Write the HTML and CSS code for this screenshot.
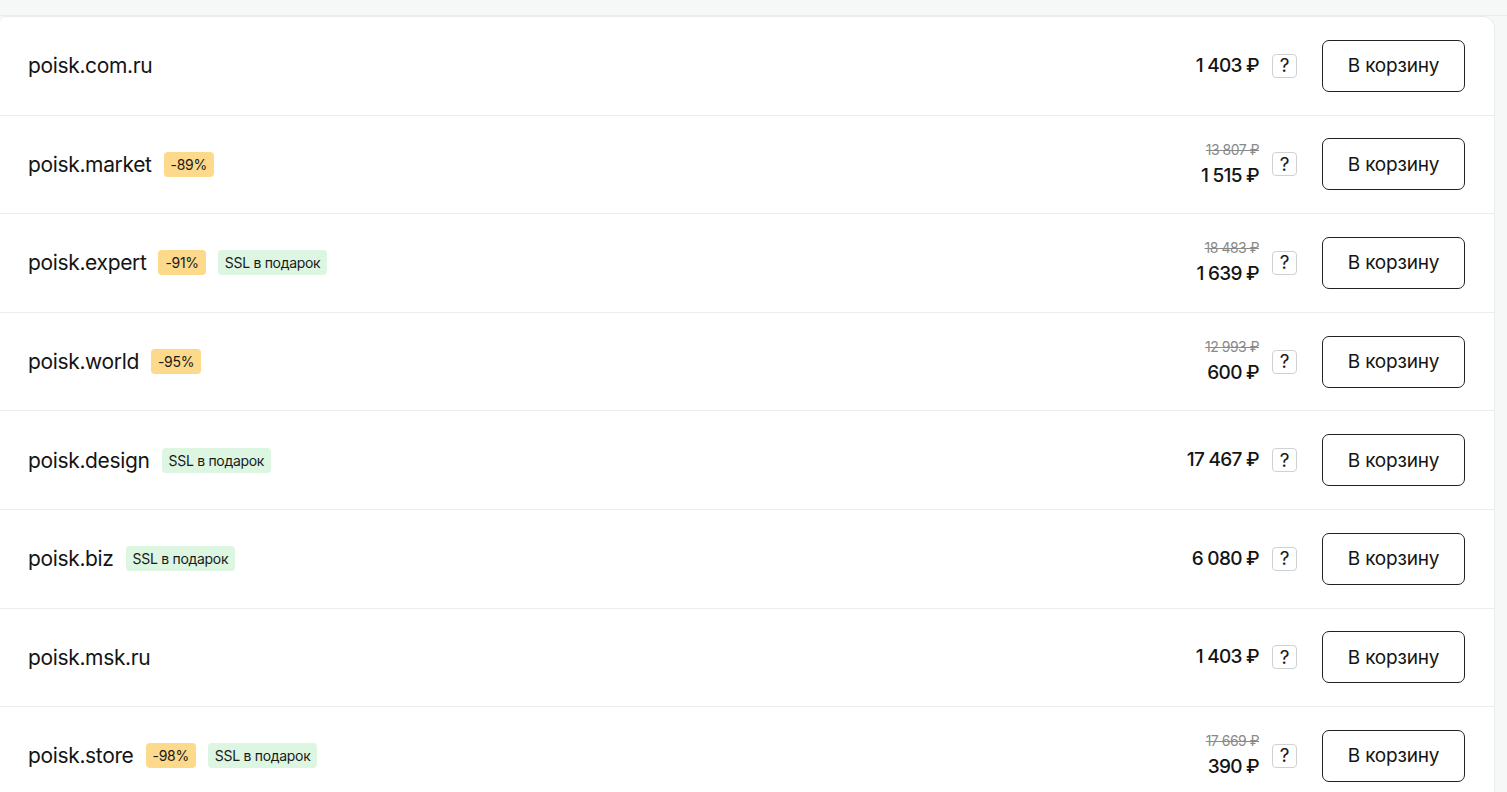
FILE: index.html
```html
<!DOCTYPE html>
<html lang="ru">
<head>
<meta charset="utf-8">
<title>Домены</title>
<link rel="stylesheet" href="styles.css">
</head>
<body>
<div class="page">
  <div class="topline"></div>
  <div class="card">
    <div class="row">
      <div class="name"><span class="domain">poisk.com.ru</span></div>
      <div class="price"><div class="now">1 403 ₽</div></div>
      <span class="q">?</span>
      <button class="cart">В корзину</button>
    </div>
    <div class="row">
      <div class="name"><span class="domain">poisk.market</span><span class="badge sale">-89%</span></div>
      <div class="price"><div class="old">13 807 ₽</div><div class="now">1 515 ₽</div></div>
      <span class="q">?</span>
      <button class="cart">В корзину</button>
    </div>
    <div class="row">
      <div class="name"><span class="domain">poisk.expert</span><span class="badge sale">-91%</span><span class="badge ssl">SSL в подарок</span></div>
      <div class="price"><div class="old">18 483 ₽</div><div class="now">1 639 ₽</div></div>
      <span class="q">?</span>
      <button class="cart">В корзину</button>
    </div>
    <div class="row">
      <div class="name"><span class="domain">poisk.world</span><span class="badge sale">-95%</span></div>
      <div class="price"><div class="old">12 993 ₽</div><div class="now">600 ₽</div></div>
      <span class="q">?</span>
      <button class="cart">В корзину</button>
    </div>
    <div class="row">
      <div class="name"><span class="domain">poisk.design</span><span class="badge ssl">SSL в подарок</span></div>
      <div class="price"><div class="now">17 467 ₽</div></div>
      <span class="q">?</span>
      <button class="cart">В корзину</button>
    </div>
    <div class="row">
      <div class="name"><span class="domain">poisk.biz</span><span class="badge ssl">SSL в подарок</span></div>
      <div class="price"><div class="now">6 080 ₽</div></div>
      <span class="q">?</span>
      <button class="cart">В корзину</button>
    </div>
    <div class="row">
      <div class="name"><span class="domain">poisk.msk.ru</span></div>
      <div class="price"><div class="now">1 403 ₽</div></div>
      <span class="q">?</span>
      <button class="cart">В корзину</button>
    </div>
    <div class="row">
      <div class="name"><span class="domain">poisk.store</span><span class="badge sale">-98%</span><span class="badge ssl">SSL в подарок</span></div>
      <div class="price"><div class="old">17 669 ₽</div><div class="now">390 ₽</div></div>
      <span class="q">?</span>
      <button class="cart">В корзину</button>
    </div>
  </div>
</div>
</body>
</html>
```
FILE: styles.css
```css
html, body {
  margin: 0;
  padding: 0;
  background: #f6f7f7;
  font-family: Inter, "Noto Sans", sans-serif;
  color: #141414;
}
.page {
  padding-top: 15px;
  height: 792px;
  overflow: hidden;
  box-sizing: border-box;
}
.topline {
  height: 1px;
  background: #eaeced;
}
.card {
  margin-right: 12px;
  background: #fff;
  border: 1px solid #e9ebec;
  border-left: none;
  border-radius: 0 12px 12px 0;
  border-top-left-radius: 6px;
}
.row {
  display: flex;
  align-items: center;
  height: 97.6px;
  padding: 0 29px 0 28px;
  border-bottom: 1px solid #ececec;
}
.name {
  flex: 1;
  display: flex;
  align-items: center;
  gap: 12px;
}
.domain {
  font-size: 21px;
  letter-spacing: -0.35px;
  color: #141414;
}
.badge {
  display: inline-block;
  height: 25px;
  line-height: 25px;
  padding: 0 7px;
  border-radius: 4px;
  font-size: 14px;
  letter-spacing: -0.3px;
  color: #1a1a1a;
}
.name .badge:first-of-type { margin-left: 1px; }
.sale { background: #fcd98b; }
.ssl { background: #dcf6e2; }
.price {
  text-align: right;
  display: flex;
  flex-direction: column;
  align-items: flex-end;
}
.old {
  font-size: 14px;
  color: #8a8a8a;
  text-decoration: line-through;
  line-height: 22px;
  letter-spacing: -0.5px;
  margin-bottom: 1px;
}
.now {
  font-size: 19px;
  font-weight: 500;
  line-height: 28px;
  letter-spacing: -0.7px;
}
.q {
  margin-left: 13px;
  width: 23px;
  height: 22px;
  border: 1px solid #cfd2d4;
  border-radius: 4px;
  display: flex;
  align-items: center;
  justify-content: center;
  font-size: 19px;
  color: #1a1a1a;
  box-sizing: content-box;
}
.cart {
  margin-left: 25px;
  width: 143px;
  height: 52px;
  border: 1px solid #222;
  border-radius: 7px;
  background: #fff;
  font-family: inherit;
  font-size: 19px;
  color: #141414;
  letter-spacing: -0.2px;
  cursor: pointer;
}
```
